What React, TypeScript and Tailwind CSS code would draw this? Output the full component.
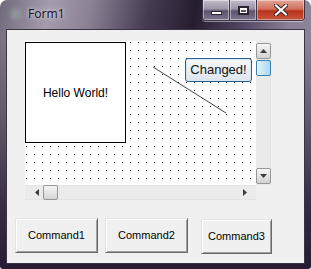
import React from "react";

const sans = "font-['Liberation_Sans',Arial,sans-serif]";

type Dir = "up" | "down" | "left" | "right";

const Arrow: React.FC<{ dir: Dir }> = ({ dir }) => {
  const pts: Record<Dir, string> = {
    up: "0,4 3.5,0 7,4",
    down: "0,0 7,0 3.5,4",
    left: "4,0 4,7 0,3.5",
    right: "0,0 0,7 4,3.5",
  };
  const vertical = dir === "up" || dir === "down";
  return (
    <svg width={vertical ? 7 : 4} height={vertical ? 4 : 7} viewBox={vertical ? "0 0 7 4" : "0 0 4 7"}>
      <polygon points={pts[dir]} fill="#3d3d3d" />
    </svg>
  );
};

const ScrollButton: React.FC<{ dir: Dir }> = ({ dir }) => (
  <div className="w-[15px] h-[16px] flex items-center justify-center rounded-[2px] border border-[#979797] bg-[linear-gradient(to_bottom,#f7f7f7,#e3e3e3_50%,#d2d2d2)]">
    <Arrow dir={dir} />
  </div>
);

const CommandButton: React.FC<{ label: string; className?: string }> = ({ label, className }) => (
  <button
    className={`h-[35px] flex items-center justify-center bg-[#f0f0f0] border border-t-[#e3e3e3] border-l-[#e3e3e3] border-r-[#696969] border-b-[#696969] shadow-[inset_1px_1px_0_#ffffff,inset_-1px_-1px_0_#a0a0a0] text-[11px] text-black ${sans} ${className ?? ""}`}
  >
    {label}
  </button>
);

const Canvas: React.FC = () => (
  <div className="relative w-[231px] h-[144px] bg-white overflow-hidden">
    <svg className="absolute left-0 top-0" width="231" height="144">
      <defs>
        <pattern id="dots" width="8" height="8" patternUnits="userSpaceOnUse">
          <rect x="1" y="1" width="1" height="1" fill="#000" />
        </pattern>
      </defs>
      <rect width="231" height="144" fill="url(#dots)" />
      <line x1="128" y1="26" x2="201" y2="72" stroke="#444" strokeWidth="1" />
    </svg>
    <div className={`absolute left-0 top-[1px] w-[101px] h-[101px] bg-white border border-black flex items-center justify-center text-[12px] text-black ${sans}`}>
      Hello World!
    </div>
    <button
      className={`absolute left-[160px] top-[17px] w-[67px] h-[24px] rounded-[3px] border border-[#2c628b] bg-[linear-gradient(to_bottom,#f6f8fb,#eaeff5_50%,#dce4ee)] shadow-[inset_0_0_0_1px_#d6e6f4] text-[13px] text-[#111] ${sans}`}
    >
      Changed!
    </button>
  </div>
);

export default function App() {
  return (
    <div className="w-[311px] h-[269px] bg-white">
      <div className="w-[311px] h-[269px] flex flex-col rounded-t-[7px] rounded-b-[3px] overflow-hidden bg-[linear-gradient(to_bottom,rgba(40,28,52,0)_15%,rgba(40,28,52,0.85)_75%,#271a34),linear-gradient(100deg,#6f6a7a_0%,#a49cab_14%,#8a8094_26%,#453a50_42%,#271d30_55%,#4e4360_68%,#8a8196_82%,#8f879b_100%)]">
        <div className="h-[29px] flex items-start">
          <div className="pt-[7px] pl-[10px] flex items-center gap-[6px]">
            <div className="w-[12px] h-[12px] rounded-full bg-[#9aa4a8] opacity-60 blur-[2px]" />
            <span className="text-[12px] leading-[14px] text-[#1c1426] [text-shadow:0_0_6px_#d8d2de,0_0_3px_#d8d2de] font-['Noto_Sans',sans-serif]">
              Form1
            </span>
          </div>
          <div className="ml-auto mr-[6px] flex h-[21px] rounded-b-[4px] border border-t-0 border-[#3b3346] shadow-[0_1px_0_rgba(255,255,255,0.45)] overflow-hidden">
            <div className="w-[27px] flex items-center justify-center border-r border-[#3b3346] bg-[linear-gradient(to_bottom,#c3bccb,#9c93a8_45%,#5d536b_55%,#7f7590)] shadow-[inset_0_0_0_1px_rgba(255,255,255,0.45)]">
              <div className="w-[11px] h-[4px] mt-[5px] bg-white border border-[#2b2533]" />
            </div>
            <div className="w-[27px] flex items-center justify-center border-r border-[#3b3346] bg-[linear-gradient(to_bottom,#c3bccb,#9c93a8_45%,#5d536b_55%,#7f7590)] shadow-[inset_0_0_0_1px_rgba(255,255,255,0.45)]">
              <div className="w-[11px] h-[9px] border border-[#2b2533] p-[1px] bg-[#2b2533]">
                <div className="w-full h-full border-[1px] border-t-[2px] border-white bg-[#5d536b]" />
              </div>
            </div>
            <div className="w-[47px] flex items-center justify-center bg-[linear-gradient(to_bottom,#e3a597,#d1705b_45%,#b8321a_55%,#c9553c)] shadow-[inset_0_0_0_1px_rgba(255,255,255,0.4)]">
              <svg width="14" height="12" viewBox="0 0 14 12">
                <path d="M2 1.5 L12 10.5 M12 1.5 L2 10.5" stroke="#3a2020" strokeWidth="4" strokeLinecap="square" />
                <path d="M2 1.5 L12 10.5 M12 1.5 L2 10.5" stroke="#ffffff" strokeWidth="2.2" strokeLinecap="square" />
              </svg>
            </div>
          </div>
        </div>

        <div className="mx-[6px] h-[235px] border border-[#3a3344] bg-[#f0f0f0] flex flex-col">
          <div className="ml-[18px] mt-[11px] flex flex-col w-[246px]">
            <div className="flex">
              <Canvas />
              <div className="w-[15px] h-[144px] bg-[#eaeaea] border-r border-[#e2e2e2] flex flex-col items-center pt-[2px] pb-[1px]">
                <ScrollButton dir="up" />
                <div className="mt-[1px] w-[15px] h-[16px] rounded-[2px] border border-[#3c7fb1] bg-[linear-gradient(to_right,#e3f4fc,#c4e5f6_50%,#a9d9f2)]" />
                <div className="flex-1" />
                <ScrollButton dir="down" />
              </div>
            </div>
            <div className="flex">
              <div className="w-[231px] h-[15px] bg-[#ebebeb] border-t border-b border-[#e3e3e3] flex items-center">
                <div className="w-[18px] flex justify-end pr-[4px]">
                  <Arrow dir="left" />
                </div>
                <div className="w-[15px] h-[15px] rounded-[2px] border border-[#979797] bg-[linear-gradient(to_bottom,#f5f5f5,#e6e6e6_50%,#d4d4d4)]" />
                <div className="flex-1" />
                <div className="w-[14px] flex justify-start pl-[1px]">
                  <Arrow dir="right" />
                </div>
              </div>
              <div className="w-[15px] h-[15px] bg-[#f0f0f0]" />
            </div>
          </div>

          <div className="mt-[18px] flex items-start">
            <CommandButton label="Command1" className="ml-[8px] w-[83px]" />
            <CommandButton label="Command2" className="ml-[7px] w-[83px]" />
            <CommandButton label="Command3" className="ml-[13px] mt-[1px] w-[71px]" />
          </div>
        </div>
      </div>
    </div>
  );
}
